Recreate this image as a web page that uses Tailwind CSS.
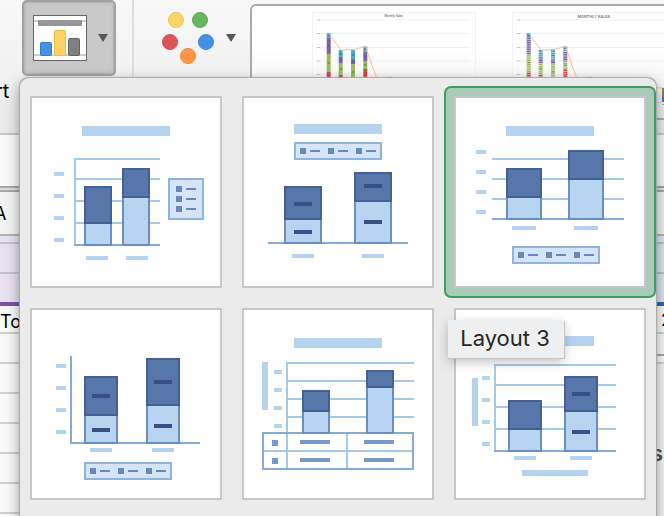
<!DOCTYPE html>
<html lang="en">
<head>
<meta charset="utf-8">
<title>Chart layouts</title>
<script src="https://cdn.jsdelivr.net/npm/@tailwindcss/browser@4"></script>
</head>
<body class="relative h-[516px] w-[664px] overflow-hidden bg-[#f8f8f8] font-[Inter,'Liberation_Sans',sans-serif] text-black">

<!-- Toolbar -->
<header class="flex h-[135px] items-start overflow-hidden border-b-2 border-[#c6c6c6] bg-gradient-to-b from-[#f8f8f8] via-[#f2f2f2] to-[#e8e8e8]">
  <div class="flex w-[22px] shrink-0 items-end self-stretch">
    <span class="-ml-[5px] mb-[28px] text-[20px] leading-[28px]">rt</span>
  </div>
  <button class="flex h-[76px] w-[94px] shrink-0 items-center rounded-[5px] border-2 border-[#a1a1a1] bg-[#c8c8c8] pl-[9px] shadow-[inset_0_0_3px_#999]">
    <svg class="h-[46px] w-[54px]" viewBox="33 15 54 46">
      <rect x="33.5" y="15.5" width="53" height="45" fill="#fff" stroke="#666"/>
      <path d="M34 21h52M34 55h52" stroke="#ccc" stroke-width="2"/>
      <rect x="38" y="20" width="44" height="6" fill="#969696"/>
      <rect x="40.5" y="42.5" width="11" height="13" rx="1" fill="#4791df" stroke="#2e7bd0"/>
      <rect x="54.500" y="30.500" width="11" height="25" rx="1" fill="#fdd265" stroke="#edbd48"/>
      <rect x="68.500" y="38.500" width="11" height="17" rx="1" fill="#808080" stroke="#636363"/>
    </svg>
    <svg class="mb-[2px] ml-[11px] h-[9px] w-[10px]" viewBox="0 0 10 9"><path d="M0 1h10L5 9z" fill="#575757"/></svg>
  </button>
  <div class="ml-[16px] h-full w-[2px] shrink-0 bg-[#dedede]"></div>
  <svg class="ml-[28px] mt-[12px] h-[53px] w-[75px] shrink-0" viewBox="162 12 75 53">
    <circle cx="176" cy="20" r="7.600" fill="#fcd366" stroke="#e9bf50" stroke-width=".8"/>
    <circle cx="200" cy="20" r="7.600" fill="#68b660" stroke="#52a24b" stroke-width=".8"/>
    <circle cx="170" cy="42" r="7.600" fill="#dc5358" stroke="#c7424a" stroke-width=".8"/>
    <circle cx="206" cy="42" r="7.600" fill="#4490e2" stroke="#327dcb" stroke-width=".8"/>
    <circle cx="188" cy="56" r="7.600" fill="#fd9445" stroke="#e87f32" stroke-width=".8"/>
    <path d="M226 34h10l-5 8z" fill="#575757"/>
  </svg>
  <div class="ml-[13px] mt-[4px] h-[116px] w-[430px] shrink-0 overflow-hidden rounded-[6px] border-2 border-[#aaa] bg-gradient-to-b from-white from-40% to-[#e9e9e9]">
    <svg class="h-[112px] w-[426px]" viewBox="252 6 426 112">
      <defs>
        <g id="chart">
          <path d="M312.500 110V12.500h163V110" fill="none" stroke="#f1f1f1"/>
          <path d="M322 20h148M322 33.500h148M322 47.500h148M322 61h148M322 74.500h148" stroke="#ededed" stroke-width=".8"/>
          <path d="M316.500 20h4M316.500 33.500h4M316.500 47.500h4M316.500 61h4M316.500 74.500h4" stroke="#c4c4c4" stroke-width="1"/>
          <path d="M326.700 33.300h4v4.400h-4zM338.700 50h4v7h-4zM351 50h4v9h-4zM363.300 46.500h4v5.200h-4z" fill="#48acc9"/>
          <path d="M326.700 37.700h4V54h-4zM338.700 57h4v6h-4zM351 59h4v5.500h-4zM363.300 51.700h4V61h-4z" fill="#8064a2"/>
          <path d="M326.700 54h4v18h-4zM338.700 63h4v12h-4zM351 64.500h4V78h-4zM363.300 61h4v8h-4z" fill="#9bbb59"/>
          <path d="M326.700 72h4v7h-4zM338.700 75h4v4h-4zM363.300 69h4v10h-4z" fill="#c44e4b"/>
          <path d="M327.500 35.500h2.500M327.500 46h2.500M327.500 63h2.500M339.500 54h2.500M339.500 60h2.500M339.500 69h2.500M351.800 55h2.500M351.800 62h2.500M351.800 72h2.500M364 49h2.500M364 57h2.500M364 65h2.500" stroke="#45554f" stroke-width=".8"/>
          <path d="M329 34l12 16 12-.3 12.300-3.200L377 79l12-2 9 1" fill="none" stroke="#f7bd91" stroke-width="1"/>
          <path d="M388 77h4v2h-4z" fill="#566"/>
        </g>
      </defs>
      <use href="#chart"/>
      <use href="#chart" x="200"/>
      <path d="M528.700 39v40M540.700 52v27M553 52v27M565.300 49v30" stroke="#fff" stroke-opacity=".65" stroke-width="4" stroke-dasharray=".8 1.400"/>
      <text x="384.500" y="17.300" font-size="3.400" font-weight="600" textLength="18.500" lengthAdjust="spacingAndGlyphs" fill="#777">Monthly Sales</text>
      <text x="577.500" y="17.500" font-size="4" font-weight="600" textLength="32.500" lengthAdjust="spacingAndGlyphs" fill="#777">MONTHLY SALES</text>
      <path d="M655 87.500l9 .7" stroke="#f7bd91"/>
      <path d="M662 88h4v5h-4z" fill="#798c58"/><path d="M662 93h4v4h-4z" fill="#c25f62"/><path d="M662 97h4v5h-4z" fill="#4d76aa"/>
      <path d="M655 102.500h7" stroke="#ddd"/><path d="M662 104.500h3" stroke="#aaa"/>
    </svg>
  </div>
</header>

<!-- Worksheet on both sides of the gallery -->
<main class="flex justify-between">
  <section class="w-[24px] overflow-hidden whitespace-nowrap text-[17px]">
    <div class="h-[51px] bg-[#f9f9f9]"></div>
    <div class="h-[6px] border-y-2 border-[#a6a6a6] bg-[#ddd]"></div>
    <div class="flex h-[44px] items-center border-b-2 border-[#b2b2b2] bg-[#f3f3f3]"><span class="-ml-[6px] text-[18px]">A</span></div>
    <div class="h-[8px] border-b-2 border-[#c3c1ca] bg-[#e6e2f0]"></div>
    <div class="h-[30px] border-b-2 border-[#c3c1ca] bg-[#e6e2f0]"></div>
    <div class="h-[28px] bg-[#e6e2f0]"></div>
    <div class="h-[4px] bg-[#7c52a8]"></div>
    <div class="flex h-[28px] items-center border-b-2 border-[#cfcfcf] bg-[#fafafa] pt-[4px] text-[18px]"><span>To</span></div>
    <div class="h-[30px] border-b-2 border-[#cfcfcf]"></div>
    <div class="h-[30px] border-b-2 border-[#cfcfcf]"></div>
    <div class="h-[30px] border-b-2 border-[#cfcfcf]"></div>
    <div class="h-[30px] border-b-2 border-[#cfcfcf]"></div>
    <div class="h-[30px] border-b-2 border-[#cfcfcf]"></div>
    <div class="h-[30px] border-b-2 border-[#cfcfcf]"></div>
  </section>
  <section class="w-[12px] overflow-hidden whitespace-nowrap text-[17px]">
    <div class="h-[51px] bg-[#f4f4f4]"></div>
    <div class="h-[6px] border-y-2 border-[#a6a6a6] bg-[#ddd]"></div>
    <div class="h-[44px] border-b-2 border-[#b2b2b2] bg-[#eeeeee]"></div>
    <div class="h-[8px] border-b-2 border-[#b9bec6] bg-[#dbe1eb]"></div>
    <div class="h-[30px] border-b-2 border-[#b9bec6] bg-[#dbe1eb]"></div>
    <div class="h-[28px] bg-[#dbe1eb]"></div>
    <div class="h-[4px] bg-[#2e62b5]"></div>
    <div class="flex h-[28px] items-center border-b-2 border-[#cfcfcf] pt-[3px]"><span class="ml-[9px]">2</span></div>
    <div class="h-[22px] border-b-2 border-[#a6a6a6]"></div>
    <div class="h-[8px] border-b-2 border-[#cfcfcf]"></div>
    <div class="h-[152px] bg-[#f2f2f2] pt-[75px] text-[22px] font-semibold leading-[28px] text-[#505050]"><span class="-ml-[1px]">s</span></div>
  </section>
</main>

<!-- Layout gallery popover -->
<div class="absolute left-[20px] top-[78px] h-[460px] w-[636px] rounded-[9px] bg-[#ebebeb] shadow-[0_0_1px_0.5px_#a8a8a8,0_5px_14px_rgba(0,0,0,0.42)]">
  <svg class="hidden">
    <defs>
      <g id="legend">
        <rect x="1" y="1" width="86" height="16" fill="#d5e5f7" stroke="#91b4df" stroke-width="2"/>
        <path d="M6 6h6v6H6zM34 6h6v6h-6zM62 6h6v6h-6zM16 8h10v2H16zM44 8h10v2H44zM72 8h10v2H72z" fill="#6789ba"/>
      </g>
    </defs>
  </svg>
  <div class="grid grid-cols-[repeat(3,212px)] grid-rows-[repeat(2,212px)] pt-[8px]">
    <div class="p-[10px]">
      <svg class="h-[192px] w-[192px] border-2 border-[#c8c8c8] bg-white" viewBox="32 98 188 188" shape-rendering="crispEdges">
        <path d="M82 126h88v10H82zM54 172h10v4H54zM54 194h10v4H54zM54 216h10v4H54zM54 238h10v4H54zM86 256h22v4H86zM126 256h22v4h-22z" fill="#b5d3ef"/>
        <path d="M74 159h86M74 179h86M74 201h86M74 223h86M75 158v88" stroke="#a7c9e8" stroke-width="2"/>
        <path d="M74 245h86" stroke="#85aad8" stroke-width="2"/>
        <path d="M85 223h26v22H85zM123 197h26v48h-26z" fill="#b7d4f0" stroke="#6c8ebf" stroke-width="2"/>
        <path d="M85 187h26v36H85zM123 169h26v28h-26z" fill="#5777aa" stroke="#445f93" stroke-width="2"/>
        <rect x="169" y="179" width="34" height="40" fill="#d5e5f7" stroke="#91b4df" stroke-width="2"/>
        <path d="M176 186h6v6h-6zM176 196h6v6h-6zM176 206h6v6h-6zM186 188h10v2h-10zM186 198h10v2h-10zM186 208h10v2h-10z" fill="#6789ba"/>
      </svg>
    </div>
    <div class="p-[10px]">
      <svg class="h-[192px] w-[192px] border-2 border-[#c8c8c8] bg-white" viewBox="244 98 188 188" shape-rendering="crispEdges">
        <path d="M294 124h88v10h-88zM292 254h22v4h-22zM362 254h22v4h-22z" fill="#b5d3ef"/>
        <use href="#legend" x="294" y="142"/>
        <path d="M268 243h140" stroke="#85aad8" stroke-width="2"/>
        <path d="M285 219h36v24h-36zM355 201h36v42h-36z" fill="#b7d4f0" stroke="#6c8ebf" stroke-width="2"/>
        <path d="M285 187h36v32h-36zM355 173h36v28h-36z" fill="#5777aa" stroke="#445f93" stroke-width="2"/>
        <path d="M294 202h18v4h-18zM294 230h18v4h-18zM364 184h18v4h-18zM364 220h18v4h-18z" fill="#3a4f85"/>
      </svg>
    </div>
    <div class="rounded-[7px] border-2 border-[#439a67] bg-[#a9ccb8] p-[8px]">
      <svg class="h-[192px] w-[192px] border-2 border-[#c8c8c8] bg-white" viewBox="456 98 188 188" shape-rendering="crispEdges">
        <path d="M506 126h88v10h-88zM476 150h10v4h-10zM476 170h10v4h-10zM476 190h10v4h-10zM476 210h10v4h-10zM512 226h24v4h-24zM574 226h24v4h-24z" fill="#b5d3ef"/>
        <path d="M492 159h132M492 179h132M492 199h132" stroke="#a7c9e8" stroke-width="2"/>
        <path d="M492 219h132" stroke="#85aad8" stroke-width="2"/>
        <path d="M507 197h34v22h-34zM569 179h34v40h-34z" fill="#b7d4f0" stroke="#6c8ebf" stroke-width="2"/>
        <path d="M507 169h34v28h-34zM569 151h34v28h-34z" fill="#5777aa" stroke="#445f93" stroke-width="2"/>
        <use href="#legend" x="512" y="246"/>
      </svg>
    </div>
    <div class="p-[10px]">
      <svg class="h-[192px] w-[192px] border-2 border-[#c8c8c8] bg-white" viewBox="32 310 188 188" shape-rendering="crispEdges">
        <path d="M56 364h10v4H56zM56 386h10v4H56zM56 408h10v4H56zM56 430h10v4H56zM90 448h22v4H90zM152 448h22v4h-22z" fill="#b5d3ef"/>
        <path d="M71 356v87h129" fill="none" stroke="#85aad8" stroke-width="2"/>
        <path d="M85 415h32v28H85zM147 405h32v38h-32z" fill="#b7d4f0" stroke="#6c8ebf" stroke-width="2"/>
        <path d="M85 377h32v38H85zM147 359h32v46h-32z" fill="#5777aa" stroke="#445f93" stroke-width="2"/>
        <path d="M92 394h18v4H92zM92 428h18v4H92zM154 380h18v4h-18zM154 424h18v4h-18z" fill="#3a4f85"/>
        <use href="#legend" x="84" y="462"/>
      </svg>
    </div>
    <div class="p-[10px]">
      <svg class="h-[192px] w-[192px] border-2 border-[#c8c8c8] bg-white" viewBox="244 310 188 188" shape-rendering="crispEdges">
        <path d="M294 338h88v10h-88zM262 362h6v48h-6zM274 370h8v4h-8zM274 388h8v4h-8zM274 406h8v4h-8zM274 424h8v4h-8z" fill="#b5d3ef"/>
        <path d="M286 363h128M286 381h128M286 399h128M286 417h128M287 362v107M262 451h152M347 434v35" stroke="#a7c9e8" stroke-width="2"/>
        <path d="M263 433h150v36H263z" fill="none" stroke="#85aad8" stroke-width="2"/>
        <path d="M303 411h26v22h-26zM367 387h26v46h-26z" fill="#b7d4f0" stroke="#6c8ebf" stroke-width="2"/>
        <path d="M303 391h26v20h-26zM367 371h26v16h-26z" fill="#5777aa" stroke="#445f93" stroke-width="2"/>
        <path d="M272 440h6v6h-6zM272 458h6v6h-6zM300 440h30v4h-30zM300 458h30v4h-30zM364 440h30v4h-30zM364 458h30v4h-30z" fill="#7699c9"/>
      </svg>
    </div>
    <div class="relative p-[10px]">
      <svg class="h-[192px] w-[192px] border-2 border-[#c8c8c8] bg-white" viewBox="456 310 188 188" shape-rendering="crispEdges">
        <path d="M506 336h88v10h-88zM472 378h6v48h-6zM482 376h8v4h-8zM482 398h8v4h-8zM482 420h8v4h-8zM482 442h8v4h-8zM514 456h22v4h-22zM570 456h22v4h-22zM522 470h66v6h-66z" fill="#b5d3ef"/>
        <path d="M494 365h122M494 385h122M494 407h122M494 429h122M495 364v88" stroke="#a7c9e8" stroke-width="2"/>
        <path d="M494 451h122" stroke="#85aad8" stroke-width="2"/>
        <path d="M509 429h32v22h-32zM565 411h32v40h-32z" fill="#b7d4f0" stroke="#6c8ebf" stroke-width="2"/>
        <path d="M509 401h32v28h-32zM565 377h32v34h-32z" fill="#5777aa" stroke="#445f93" stroke-width="2"/>
        <path d="M572 392h18v4h-18zM572 430h18v4h-18z" fill="#3a4f85"/>
      </svg>
      <div class="absolute left-[4px] top-[22px] flex h-[38px] w-[116px] items-center justify-center whitespace-nowrap bg-[#eeeff1] pb-[2px] pr-[2px] text-[22px] text-[#262626] shadow-[0_0_1px_0.5px_#c4c4c4,0_4px_12px_rgba(0,0,0,0.25)]">Layout 3</div>
    </div>
  </div>
</div>
</body>
</html>
